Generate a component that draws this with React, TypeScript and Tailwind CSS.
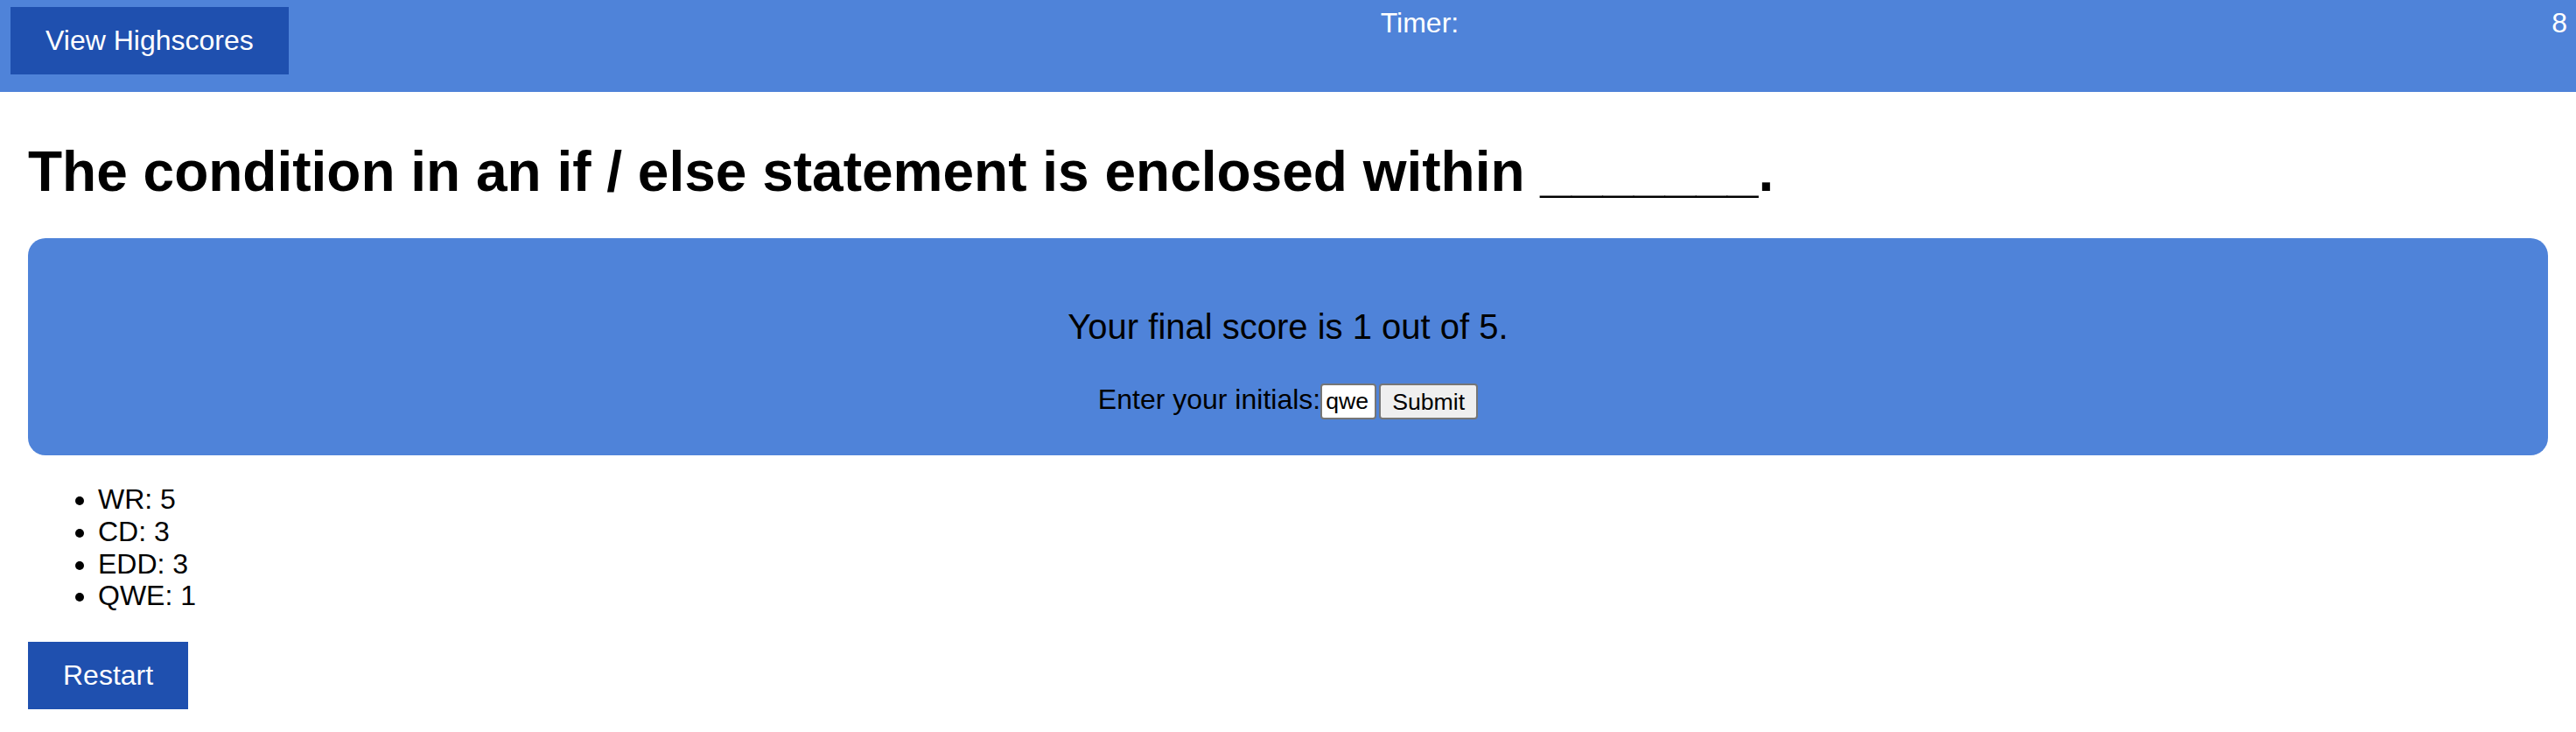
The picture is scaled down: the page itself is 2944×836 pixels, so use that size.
import React from "react";

const scores = [
  { initials: "WR", score: 5 },
  { initials: "CD", score: 3 },
  { initials: "EDD", score: 3 },
  { initials: "QWE", score: 1 },
];

const App: React.FC = () => {
  return (
    <div className="min-h-screen bg-white text-black font-['Liberation_Sans',Arial,sans-serif]">
      <header className="flex items-start h-[105px] bg-[#4f83d9] text-white">
        <button className="ml-3 mt-2 bg-[#1f50af] px-10 py-5 text-[32px] leading-[37px] text-white">
          View Highscores
        </button>
        <div className="ml-[1248px] mt-2 text-[32px] leading-[37px]">
          Timer:
        </div>
        <div className="ml-auto mr-[10px] mt-2 text-[32px] leading-[37px]">
          8
        </div>
      </header>

      <main className="px-8">
        <h1 className="mt-[54px] mb-[39px] text-[64px] font-bold leading-[74px]">
          The condition in an if / else statement is enclosed within _______.
        </h1>

        <div className="flex flex-col items-center gap-[42px] rounded-[20px] bg-[#4f83d9] pt-[78px] pb-[41px]">
          <p className="text-[40px] leading-[46px]">
            Your final score is 1 out of 5.
          </p>
          <div className="flex items-start h-[41px]">
            <label className="text-[32px] leading-[37px]">
              Enter your initials:
            </label>
            <input
              className="w-[64px] h-[41px] rounded-[4px] border-2 border-[#767676] bg-white px-[4px] text-[26.67px] text-black"
              defaultValue="qwe"
            />
            <button className="ml-[3px] h-[41px] rounded-[4px] border-2 border-[#767676] bg-[#efefef] px-[13px] text-[26.67px] leading-[30px]">
              Submit
            </button>
          </div>
        </div>

        <ul className="mt-8 list-disc pl-[80px] text-[32px] leading-[36.8px]">
          {scores.map((s) => (
            <li key={s.initials}>
              {s.initials}: {s.score}
            </li>
          ))}
        </ul>

        <button className="mt-[34px] bg-[#1f50af] px-10 py-5 text-[32px] leading-[37px] text-white">
          Restart
        </button>
      </main>
    </div>
  );
};

export default App;
